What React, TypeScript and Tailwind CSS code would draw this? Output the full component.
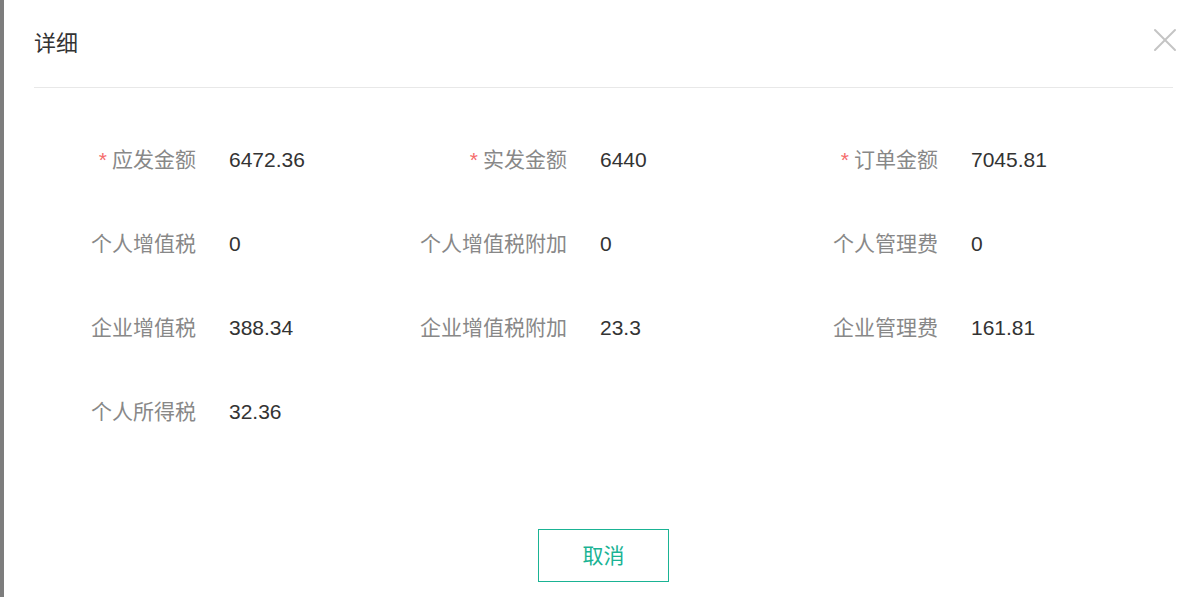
import { X } from 'lucide-react';

type Field = { label: string; value: string; required?: boolean };

const rows: Field[][] = [
  [
    { label: '应发金额', value: '6472.36', required: true },
    { label: '实发金额', value: '6440', required: true },
    { label: '订单金额', value: '7045.81', required: true },
  ],
  [
    { label: '个人增值税', value: '0' },
    { label: '个人增值税附加', value: '0' },
    { label: '个人管理费', value: '0' },
  ],
  [
    { label: '企业增值税', value: '388.34' },
    { label: '企业增值税附加', value: '23.3' },
    { label: '企业管理费', value: '161.81' },
  ],
  [{ label: '个人所得税', value: '32.36' }],
];

const font = { fontFamily: '"Liberation Sans", "Noto Sans CJK SC", sans-serif' };

function Item({ field }: { field: Field }) {
  return (
    <div className="flex w-[371px] shrink-0 items-center">
      <div className="flex w-[129px] shrink-0 justify-end text-[21px] leading-[40px] text-[#888888] whitespace-nowrap">
        <span>
          {field.required && <span className="mr-[5px] text-[#f56c6c]">*</span>}
          {field.label}
        </span>
      </div>
      <div className="ml-[33px] text-[21px] leading-[40px] text-[#333333]">{field.value}</div>
    </div>
  );
}

export default function App() {
  return (
    <div className="flex h-[597px] w-[1193px] overflow-hidden bg-white" style={font}>
      <div className="w-[4px] shrink-0 bg-[#7d7d7d]" />
      <div className="relative flex w-[1199px] shrink-0 flex-col bg-white px-[30px]">
        <div className="border-b border-[#e8e8e8] pt-[28px] pb-[27px]">
          <h2 className="text-[22px] leading-[32px] text-[#333333]">详细</h2>
        </div>
        <button className="absolute top-[20px] right-[18px] text-[#c4c4c4]">
          <X size={40} strokeWidth={1.2} />
        </button>

        <div className="flex flex-col gap-[44px] pt-[52px] pl-[33px]">
          {rows.map((row, i) => (
            <div key={i} className="flex">
              {row.map(f => (
                <Item key={f.label} field={f} />
              ))}
            </div>
          ))}
        </div>

        <div className="flex justify-center pt-[97px]">
          <button className="h-[53px] w-[131px] border border-[#1ab394] text-[21px] text-[#1ab394]">
            取消
          </button>
        </div>
      </div>
    </div>
  );
}
